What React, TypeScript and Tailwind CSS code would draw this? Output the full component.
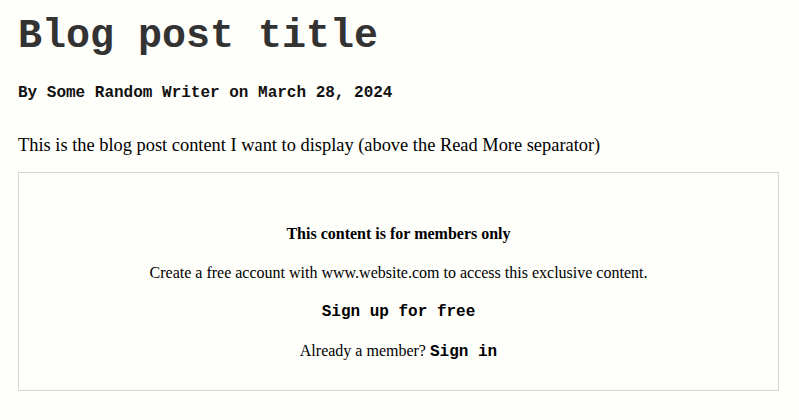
import React from "react";

export default function App() {
  const mono = { fontFamily: '"Liberation Mono", "Courier New", monospace' };
  const serif = { fontFamily: '"Liberation Serif", "Times New Roman", serif' };
  return (
    <div className="min-h-[420px] w-full bg-[#fefefa] pl-[18px] pr-[20px] pt-[15px] text-black" style={serif}>
      <h1 className="text-[40px] font-bold leading-[44px] text-[#333333]" style={mono}>
        Blog post title
      </h1>
      <p className="mt-[24px] text-[16px] font-bold leading-[20px] text-[#111111]" style={mono}>
        By Some Random Writer on March 28, 2024
      </p>
      <p className="mt-[31px] text-[18.4px] leading-[22px]">
        This is the blog post content I want to display (above the Read More separator)
      </p>
      <div className="mt-[16px] flex h-[219px] w-[761px] flex-col items-center border border-[#d6d6d6] pt-[51px] text-[16px] leading-[20px]">
        <p className="font-bold">This content is for members only</p>
        <p className="mt-[19px]">Create a free account with www.website.com to access this exclusive content.</p>
        <p className="mt-[19px] font-bold" style={mono}>Sign up for free</p>
        <p className="mt-[19px]">
          Already a member? <span className="font-bold" style={mono}>Sign in</span>
        </p>
      </div>
    </div>
  );
}
